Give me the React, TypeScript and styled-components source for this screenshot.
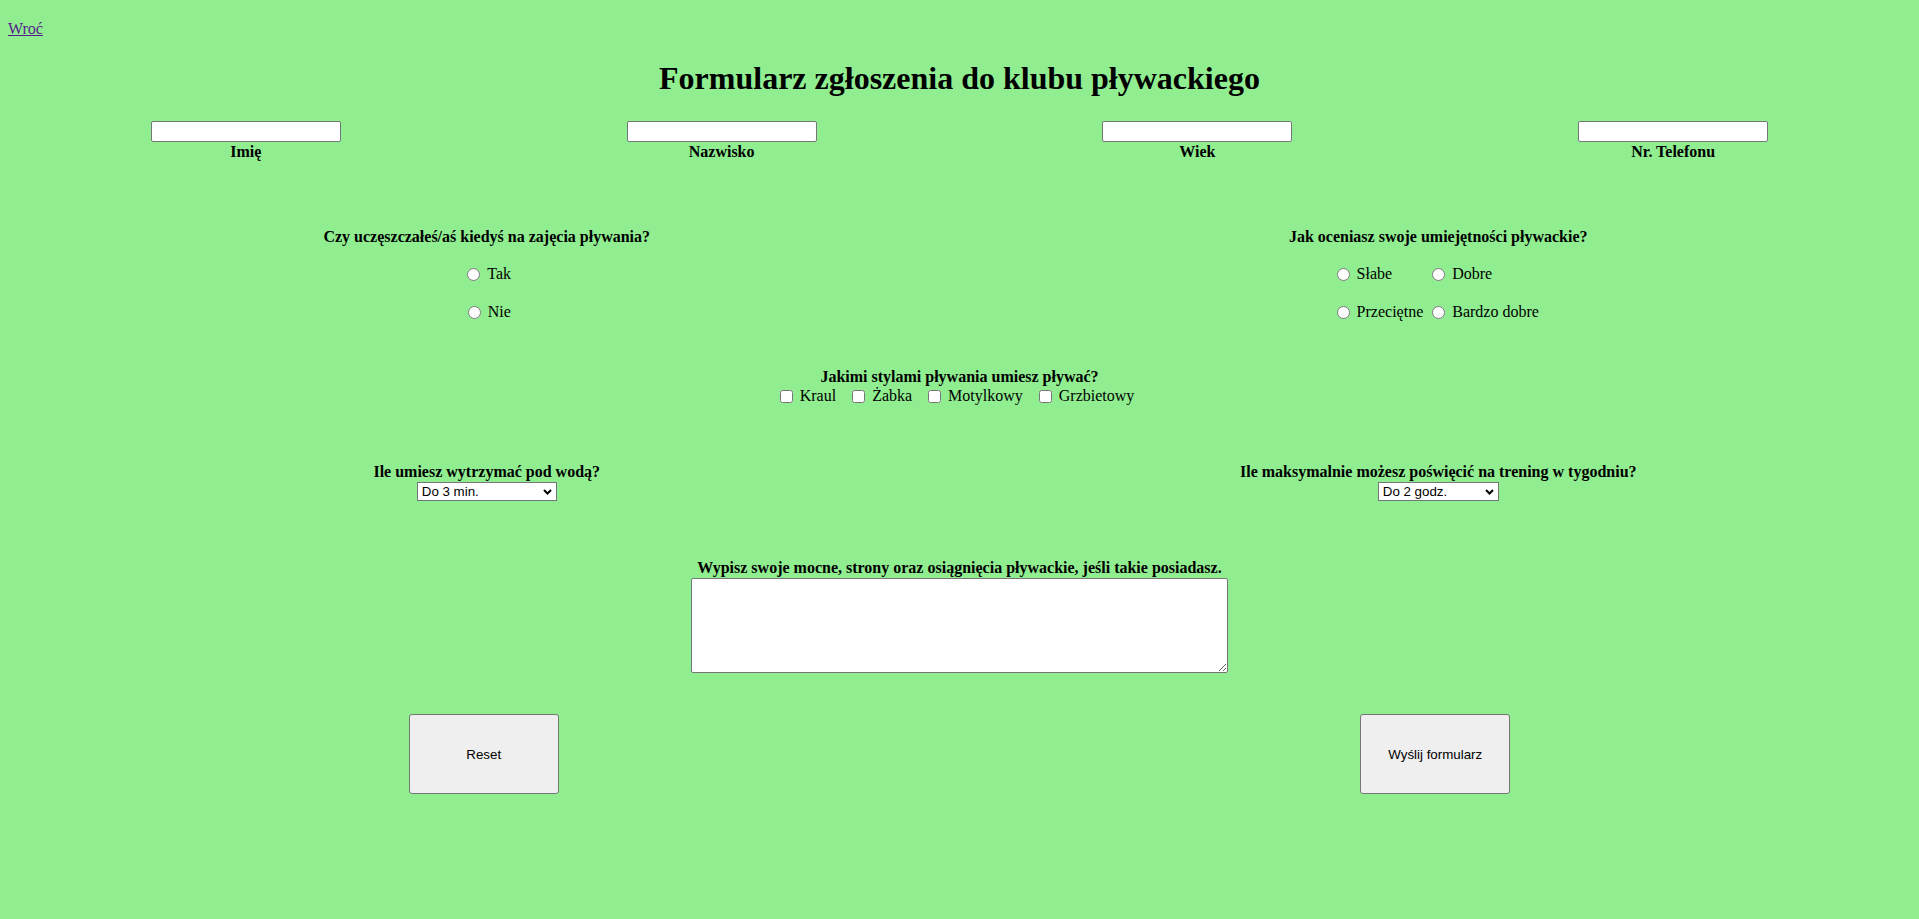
import React from "react";
import styled, { createGlobalStyle } from "styled-components";

const GlobalStyle = createGlobalStyle`
  html, body {
    margin: 0;
    padding: 0;
    background: #90ee90;
  }
  body {
    font-family: "Liberation Serif", "Times New Roman", serif;
    font-size: 16px;
    color: #000;
  }
`;

const Page = styled.div`
  box-sizing: border-box;
  min-height: 919px;
  padding: 0 8px;
`;

const TopBar = styled.div`
  padding-top: 20px;
  line-height: 18px;
`;

const BackLink = styled.a`
  color: #551a8b;
  text-decoration: underline;
`;

const Title = styled.h1`
  margin: 22px 0 0;
  font-size: 32px;
  line-height: 37px;
  font-weight: bold;
  text-align: center;
`;

const Form = styled.form`
  margin: 0;
`;

const FieldRow = styled.div`
  display: grid;
  grid-template-columns: repeat(4, 1fr);
  margin-top: 24px;
`;

const Field = styled.div`
  display: flex;
  flex-direction: column;
  align-items: center;
`;

const TextInput = styled.input`
  box-sizing: border-box;
  width: 190px;
  height: 21px;
  margin: 0;
  padding: 1px 2px;
  border: 1px solid #767676;
  border-radius: 2px;
  background: #fff;
  font-family: "Liberation Sans", Arial, sans-serif;
  font-size: 13.333px;
`;

const FieldLabel = styled.label`
  margin-top: 1px;
  font-weight: bold;
  line-height: 18px;
`;

const Halves = styled.div<{ $top: number; $shift?: number }>`
  display: grid;
  grid-template-columns: 1fr 1fr;
  margin-top: ${(p) => p.$top}px;
  margin-left: ${(p) => p.$shift ?? 0}px;
  margin-right: ${(p) => -(p.$shift ?? 0)}px;
`;

const Block = styled.div`
  display: flex;
  flex-direction: column;
  align-items: center;
`;

const Question = styled.div`
  font-weight: bold;
  line-height: 18px;
  text-align: center;
`;

const OptionStack = styled.div`
  display: flex;
  flex-direction: column;
  align-items: center;
  gap: 16px;
  margin-top: 17px;
`;

const OptionGrid = styled.div`
  display: grid;
  grid-template-columns: auto auto;
  column-gap: 4px;
  row-gap: 16px;
  justify-items: start;
  margin-top: 17px;
  margin-left: -6px;
`;

const OptionLabel = styled.label`
  display: flex;
  align-items: center;
  gap: 7px;
  height: 22px;
  line-height: 18px;
  white-space: nowrap;
`;

const Radio = styled.input`
  width: 13px;
  height: 13px;
  margin: 0 0 0 5px;
`;

const CheckSection = styled.div`
  display: flex;
  flex-direction: column;
  align-items: center;
  margin-top: 45px;
`;

const CheckRow = styled.div`
  display: flex;
  justify-content: center;
  gap: 12px;
  height: 18px;
  margin-top: 1px;
  padding-right: 9px;
`;

const CheckLabel = styled.label`
  display: flex;
  align-items: center;
  gap: 7px;
  line-height: 18px;
  white-space: nowrap;
`;

const Checkbox = styled.input`
  width: 13px;
  height: 13px;
  margin: 0 0 0 4px;
`;

const SelectWrap = styled.div<{ $width: number }>`
  position: relative;
  width: ${(p) => p.$width}px;
  height: 19px;
  margin-top: 1px;
`;

const Select = styled.select`
  appearance: none;
  -webkit-appearance: none;
  box-sizing: border-box;
  width: 100%;
  height: 100%;
  margin: 0;
  padding: 0 20px 0 4px;
  border: 1px solid #767676;
  border-radius: 0;
  background: #fff;
  color: #000;
  font-family: "Liberation Sans", Arial, sans-serif;
  font-size: 13.333px;
`;

const Chevron = styled.svg`
  position: absolute;
  right: 5px;
  top: 7px;
  pointer-events: none;
`;

const NotesSection = styled.div`
  display: flex;
  flex-direction: column;
  align-items: center;
  margin-top: 58px;
`;

const NotesArea = styled.textarea`
  box-sizing: border-box;
  width: 537px;
  height: 95px;
  margin: 1px 0 0;
  padding: 2px;
  border: 1px solid #767676;
  border-radius: 2px;
  background: #fff;
  font-family: "Liberation Mono", monospace;
  font-size: 13.333px;
`;

const ActionButton = styled.button`
  box-sizing: border-box;
  width: 150px;
  height: 80px;
  margin: 0;
  border: 1px solid #767676;
  border-radius: 3px;
  background: #efefef;
  color: #000;
  font-family: "Liberation Sans", Arial, sans-serif;
  font-size: 13.333px;
  cursor: pointer;
`;

const ButtonCell = styled.div`
  display: flex;
  justify-content: center;
`;

const fields = ["Imię", "Nazwisko", "Wiek", "Nr. Telefonu"];
const styles = ["Kraul", "Żabka", "Motylkowy", "Grzbietowy"];

function DropDown({ width, options }: { width: number; options: string[] }) {
  return (
    <SelectWrap $width={width}>
      <Select defaultValue={options[0]}>
        {options.map((o) => (
          <option key={o} value={o}>
            {o}
          </option>
        ))}
      </Select>
      <Chevron width="9" height="6" viewBox="0 0 9 6">
        <path d="M1 1 L4.5 4.5 L8 1" fill="none" stroke="#000" strokeWidth="2" />
      </Chevron>
    </SelectWrap>
  );
}

export default function App() {
  return (
    <>
      <GlobalStyle />
      <Page>
        <TopBar>
          <BackLink href="#">Wroć</BackLink>
        </TopBar>
        <Title>Formularz zgłoszenia do klubu pływackiego</Title>
        <Form onSubmit={(e) => e.preventDefault()}>
          <FieldRow>
            {fields.map((f) => (
              <Field key={f}>
                <TextInput type="text" />
                <FieldLabel>{f}</FieldLabel>
              </Field>
            ))}
          </FieldRow>

          <Halves $top={67} $shift={3}>
            <Block>
              <Question>Czy uczęszczałeś/aś kiedyś na zajęcia pływania?</Question>
              <OptionStack>
                <OptionLabel>
                  <Radio type="radio" name="attended" />
                  Tak
                </OptionLabel>
                <OptionLabel>
                  <Radio type="radio" name="attended" />
                  Nie
                </OptionLabel>
              </OptionStack>
            </Block>
            <Block>
              <Question>Jak oceniasz swoje umiejętności pływackie?</Question>
              <OptionGrid>
                <OptionLabel>
                  <Radio type="radio" name="skill" />
                  Słabe
                </OptionLabel>
                <OptionLabel>
                  <Radio type="radio" name="skill" />
                  Dobre
                </OptionLabel>
                <OptionLabel>
                  <Radio type="radio" name="skill" />
                  Przeciętne
                </OptionLabel>
                <OptionLabel>
                  <Radio type="radio" name="skill" />
                  Bardzo dobre
                </OptionLabel>
              </OptionGrid>
            </Block>
          </Halves>

          <CheckSection>
            <Question>Jakimi stylami pływania umiesz pływać?</Question>
            <CheckRow>
              {styles.map((s) => (
                <CheckLabel key={s}>
                  <Checkbox type="checkbox" />
                  {s}
                </CheckLabel>
              ))}
            </CheckRow>
          </CheckSection>

          <Halves $top={58} $shift={3}>
            <Block>
              <Question>Ile umiesz wytrzymać pod wodą?</Question>
              <DropDown width={140} options={["Do 3 min.", "Do 1 min.", "Do 2 min.", "Powyżej 3 min."]} />
            </Block>
            <Block>
              <Question>Ile maksymalnie możesz poświęcić na trening w tygodniu?</Question>
              <DropDown width={121} options={["Do 2 godz.", "Do 4 godz.", "Do 6 godz.", "Powyżej 6 godz."]} />
            </Block>
          </Halves>

          <NotesSection>
            <Question>Wypisz swoje mocne, strony oraz osiągnięcia pływackie, jeśli takie posiadasz.</Question>
            <NotesArea />
          </NotesSection>

          <Halves $top={41}>
            <ButtonCell>
              <ActionButton type="reset">Reset</ActionButton>
            </ButtonCell>
            <ButtonCell>
              <ActionButton type="submit">Wyślij formularz</ActionButton>
            </ButtonCell>
          </Halves>
        </Form>
      </Page>
    </>
  );
}
